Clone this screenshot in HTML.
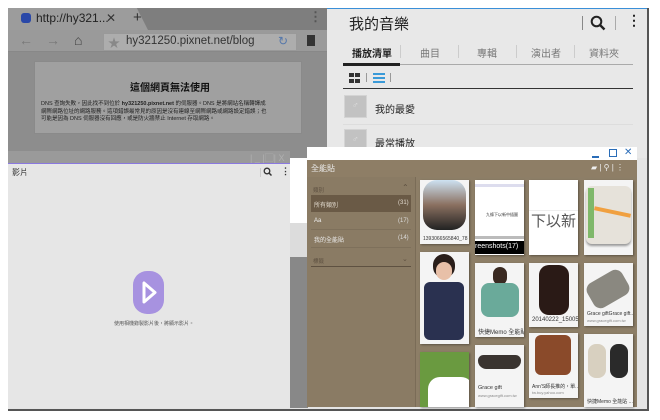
<!DOCTYPE html>
<html><head><meta charset="utf-8"><style>
*{margin:0;padding:0;box-sizing:border-box}
body{width:660px;height:420px;background:#fff;position:relative;overflow:hidden;font-family:"Liberation Sans","Noto Sans CJK TC",sans-serif}
.a{position:absolute}
.t{position:absolute;white-space:nowrap}
.card{position:absolute;background:#f4f4f4;box-shadow:1px 1px 2px rgba(0,0,0,.35);overflow:hidden}
.cap{position:absolute;left:3px;font-size:6px;color:#333;white-space:nowrap}
</style></head><body>
<div class="a" style="left:8px;top:8px;width:641px;height:403px;background:#555"></div>
<div class="a" style="left:8px;top:8px;width:639px;height:401px;background:#e4e4e4"></div>

<!-- browser -->
<div class="a" style="left:8px;top:8px;width:319px;height:160px;background:#8d8d8d"></div>
<div class="a" style="left:8px;top:8px;width:319px;height:22px;background:#7e7e7e"></div>
<div class="a" style="left:8px;top:8px;width:140px;height:22px;background:#9c9c9c;clip-path:polygon(0 0,92% 0,100% 100%,0 100%)"></div>
<div class="a" style="left:21px;top:13px;width:10px;height:10px;border-radius:3px;background:#2a48a8"></div>
<div class="t" style="left:36px;top:11px;font-size:12px;color:#222">http://hy321...</div>
<div class="t" style="left:106px;top:11px;font-size:12px;color:#333">✕</div>
<div class="t" style="left:133px;top:9px;font-size:15px;color:#333">+</div>
<div class="t" style="left:309px;top:9px;font-size:13px;color:#555;font-weight:bold">⋮</div>
<div class="a" style="left:8px;top:30px;width:319px;height:22px;background:#9a9a9a;border-bottom:1px solid #888"></div>
<div class="t" style="left:19px;top:32px;font-size:14px;color:#777">←</div>
<div class="t" style="left:46px;top:32px;font-size:14px;color:#777">→</div>
<div class="t" style="left:74px;top:32px;font-size:14px;color:#444">⌂</div>
<div class="a" style="left:103px;top:33px;width:194px;height:18px;background:#adadad;border:1px solid #999"></div>
<div class="t" style="left:108px;top:34px;font-size:12px;color:#888">★</div>
<div class="t" style="left:126px;top:35px;font-size:11.5px;color:#333">hy321250.pixnet.net/blog</div>
<div class="t" style="left:278px;top:34px;font-size:12px;color:#5577aa">↻</div>
<div class="a" style="left:307px;top:35px;width:8px;height:11px;background:#333"></div>
<div class="a" style="left:34px;top:61px;width:268px;height:73px;background:#a0a0a0;border:1px solid #8a8a8a"></div>
<div class="t" style="left:130px;top:79px;font-size:10px;font-weight:bold;color:#111">這個網頁無法使用</div>
<div class="t" style="left:41px;top:101px;font-size:5.5px;line-height:7.5px;color:#222">DNS 查詢失敗，因此找不到位於 <b>hy321250.pixnet.net</b> 的伺服器。DNS 是將網站名稱轉譯成<br>網際網路位址的網路服務。這項錯誤最常見的原因是沒有連線至網際網路或網路設定錯誤；也<br>可能是因為 DNS 伺服器沒有回應，或是防火牆禁止 Internet 存取網路。</div>

<!-- music -->
<div class="a" style="left:327px;top:8px;width:320px;height:150px;background:#e8e8e8;border-top:1px solid #3a8fd8"></div>
<div class="t" style="left:349px;top:13px;font-size:15px;color:#222">我的音樂</div>
<div class="a" style="left:582px;top:16px;width:1px;height:14px;background:#888"></div>
<svg class="a" style="left:590px;top:15px" width="16" height="16"><circle cx="6.5" cy="6.5" r="4.8" fill="none" stroke="#222" stroke-width="2"/><path d="M10 10 L14.5 14.5" stroke="#222" stroke-width="2.4"/></svg>
<div class="a" style="left:615px;top:16px;width:1px;height:14px;background:#aaa"></div>
<div class="t" style="left:627px;top:12px;font-size:14px;color:#222;font-weight:bold">⋮</div>
<div class="t" style="left:352px;top:45px;font-size:10px;color:#222;font-weight:bold">播放清單</div>
<div class="t" style="left:420px;top:45px;font-size:10px;color:#777">曲目</div>
<div class="t" style="left:477px;top:45px;font-size:10px;color:#777">專輯</div>
<div class="t" style="left:531px;top:45px;font-size:10px;color:#777">演出者</div>
<div class="t" style="left:589px;top:45px;font-size:10px;color:#777">資料夾</div>
<div class="a" style="left:400px;top:45px;width:1px;height:13px;background:#ccc"></div>
<div class="a" style="left:458px;top:45px;width:1px;height:13px;background:#ccc"></div>
<div class="a" style="left:516px;top:45px;width:1px;height:13px;background:#ccc"></div>
<div class="a" style="left:574px;top:45px;width:1px;height:13px;background:#ccc"></div>
<div class="a" style="left:343px;top:64px;width:290px;height:1px;background:#aaa"></div>
<div class="a" style="left:343px;top:63px;width:57px;height:3px;background:#222"></div>
<div class="a" style="left:349px;top:73px;width:11px;height:10px;background:linear-gradient(90deg,#333 45%,transparent 45%,transparent 55%,#333 55%)"></div>
<div class="a" style="left:349px;top:77px;width:11px;height:2px;background:#e8e8e8"></div>
<div class="a" style="left:366px;top:73px;width:1px;height:9px;background:#999"></div>
<div class="a" style="left:373px;top:73px;width:12px;height:10px;border-top:2px solid #3a9ad8;border-bottom:2px solid #3a9ad8"></div>
<div class="a" style="left:373px;top:77px;width:12px;height:2px;background:#3a9ad8"></div>
<div class="a" style="left:390px;top:73px;width:1px;height:9px;background:#999"></div>
<div class="a" style="left:343px;top:88px;width:290px;height:1px;background:#333"></div>
<div class="a" style="left:344px;top:95px;width:23px;height:23px;background:#c2c2c2;border:1px solid #d4d4d4"></div>
<div class="t" style="left:352px;top:100px;font-size:9px;color:#ddd">♂</div>
<div class="t" style="left:375px;top:101px;font-size:10px;color:#222">我的最愛</div>
<div class="a" style="left:343px;top:124px;width:290px;height:1px;background:#ddd"></div>
<div class="a" style="left:344px;top:129px;width:23px;height:23px;background:#c2c2c2;border:1px solid #d4d4d4"></div>
<div class="t" style="left:352px;top:134px;font-size:9px;color:#ddd">♂</div>
<div class="t" style="left:375px;top:135px;font-size:10px;color:#222">最常播放</div>

<div class="a" style="left:290px;top:158px;width:18px;height:250px;background:#888"></div>
<div class="a" style="left:290px;top:158px;width:18px;height:65px;background:#fff"></div>
<div class="a" style="left:290px;top:223px;width:18px;height:34px;background:#dcdcdc"></div>

<!-- video window -->
<div class="a" style="left:8px;top:151px;width:282px;height:13px;background:#9a9a9a"></div>
<div class="t" style="left:250px;top:151px;font-size:9px;color:#b0b0b0">| _ |▢| X</div>
<div class="a" style="left:8px;top:163px;width:282px;height:1px;background:#8a78e0"></div>
<div class="a" style="left:8px;top:164px;width:282px;height:244px;background:#e6e6e6"></div>
<div class="t" style="left:12px;top:167px;font-size:8px;color:#333">影片</div>
<div class="a" style="left:260px;top:168px;width:1px;height:9px;background:#ccc"></div>
<svg class="a" style="left:263px;top:167px" width="9" height="10"><circle cx="4" cy="4" r="2.8" fill="none" stroke="#333" stroke-width="1.3"/><path d="M6 6 L8.5 8.5" stroke="#333" stroke-width="1.5"/></svg>
<div class="t" style="left:281px;top:166px;font-size:9px;color:#333;font-weight:bold">⋮</div>
<div class="a" style="left:133px;top:271px;width:31px;height:43px;border-radius:14px;background:#a792e0"></div>
<svg class="a" style="left:133px;top:271px" width="31" height="43"><path d="M11 12 L11 31 L22 21.5 Z" fill="none" stroke="#fff" stroke-width="3" stroke-linejoin="round"/></svg>
<div class="t" style="left:114px;top:320px;font-size:5px;color:#555">使用相機錄製影片後，將顯示影片。</div>

<!-- pixnet -->
<div class="a" style="left:307px;top:147px;width:330px;height:13px;background:#fff"></div>
<div class="a" style="left:592px;top:156px;width:7px;height:2px;background:#2a6db8"></div>
<div class="a" style="left:609px;top:149px;width:8px;height:8px;border:1px solid #2a6db8"></div>
<div class="t" style="left:624px;top:147px;font-size:10px;color:#2a6db8">✕</div>
<div class="a" style="left:307px;top:160px;width:330px;height:17px;background:#8e7e66"></div>
<div class="t" style="left:311px;top:163px;font-size:8px;color:#eee">全能貼</div>
<div class="t" style="left:591px;top:163px;font-size:8px;color:#eee">▰ | ⚲ | ⋮</div>
<div class="a" style="left:307px;top:177px;width:330px;height:230px;background:#8d7e67"></div>
<div class="a" style="left:307px;top:177px;width:109px;height:230px;background:#8a7b64;border-right:1px solid #7a6c57"></div>
<div class="t" style="left:313px;top:186px;font-size:5.5px;color:#5e5141">類別</div>
<div class="t" style="left:402px;top:183px;font-size:8px;color:#5e5141">⌃</div>
<div class="a" style="left:311px;top:195px;width:100px;height:17px;background:#6a5a46"></div>
<div class="t" style="left:314px;top:200px;font-size:6px;color:#e0d8cc">所有類別</div>
<div class="t" style="left:398px;top:200px;font-size:6px;color:#e0d8cc">(31)</div>
<div class="t" style="left:314px;top:218px;font-size:6px;color:#eee">Aa</div>
<div class="t" style="left:398px;top:218px;font-size:6px;color:#ddd">(17)</div>
<div class="a" style="left:311px;top:229px;width:100px;height:1px;background:#7e705b"></div>
<div class="t" style="left:314px;top:235px;font-size:6px;color:#eee">我的全能貼</div>
<div class="t" style="left:398px;top:235px;font-size:6px;color:#ddd">(14)</div>
<div class="a" style="left:311px;top:247px;width:100px;height:1px;background:#7e705b"></div>
<div class="t" style="left:313px;top:257px;font-size:5.5px;color:#5e5141">標籤</div>
<div class="t" style="left:402px;top:255px;font-size:7px;color:#5e5141">⌄</div>
<div class="a" style="left:311px;top:266px;width:100px;height:1px;background:#5e5141"></div>

<div class="card" style="left:420px;top:180px;width:49px;height:64px">
 <div class="a" style="left:3px;top:0;width:43px;height:50px;border-radius:14px;background:linear-gradient(#cde2f2,#8a7060 50%,#222)"></div>
 <div class="cap" style="top:56px;font-size:5px">1393066565840_78</div></div>
<div class="card" style="left:475px;top:180px;width:49px;height:75px;background:#fff">
 <div class="a" style="left:0;top:4px;width:49px;height:3px;background:#dde"></div>
 <div class="cap" style="top:32px;left:11px;font-size:4px">九條下以新中插圖</div>
 <div class="a" style="left:0;top:56px;width:49px;height:3px;background:#bbb"></div>
 <div class="a" style="left:0;top:61px;width:49px;height:13px;background:#000"></div>
 <div class="cap" style="top:63px;left:0;color:#fff;font-size:7px">reenshots(17)</div></div>
<div class="card" style="left:529px;top:180px;width:49px;height:75px;background:#fff">
 <div class="a" style="left:0;top:30px;width:49px;height:1px;background:#eee"></div>
 <div class="t" style="left:2px;top:30px;font-size:15px;color:#555">下以新</div></div>
<div class="card" style="left:584px;top:180px;width:49px;height:75px">
 <div class="a" style="left:2px;top:6px;width:45px;height:58px;border-radius:6px;background:#e6e2da;box-shadow:0 2px 2px #999"></div>
 <div class="a" style="left:4px;top:8px;width:6px;height:50px;background:#7fb86a"></div>
 <div class="a" style="left:10px;top:30px;width:37px;height:4px;background:#f0a040;transform:rotate(12deg)"></div></div>
<div class="card" style="left:420px;top:252px;width:49px;height:92px">
 <div class="a" style="left:13px;top:2px;width:22px;height:24px;border-radius:11px;background:#2a1e1a"></div>
 <div class="a" style="left:16px;top:10px;width:16px;height:18px;border-radius:8px;background:#e8c0a8"></div>
 <div class="a" style="left:4px;top:30px;width:40px;height:58px;border-radius:6px;background:#2a3150"></div></div>
<div class="card" style="left:475px;top:263px;width:49px;height:74px">
 <div class="a" style="left:18px;top:4px;width:14px;height:18px;border-radius:7px;background:#3a2a22"></div>
 <div class="a" style="left:6px;top:20px;width:38px;height:34px;border-radius:8px;background:#6aaa9a"></div>
 <div class="cap" style="top:64px">快捷Memo 全能貼 ...</div></div>
<div class="card" style="left:529px;top:263px;width:49px;height:64px">
 <div class="a" style="left:10px;top:2px;width:30px;height:50px;border-radius:10px;background:#2a1a16"></div>
 <div class="cap" style="top:54px">20140222_150059</div></div>
<div class="card" style="left:584px;top:263px;width:49px;height:63px">
 <div class="a" style="left:4px;top:12px;width:40px;height:28px;border-radius:8px;background:#8a8880;transform:rotate(-30deg)"></div>
 <div class="cap" style="top:48px;font-size:5px">Grace giftGrace gift...</div>
 <div class="cap" style="top:55px;font-size:4px;color:#888">www.gracegift.com.tw</div></div>
<div class="card" style="left:420px;top:352px;width:49px;height:55px;background:#6a9a40">
 <div class="a" style="left:8px;top:25px;width:45px;height:40px;border-radius:12px;background:#fff"></div></div>
<div class="card" style="left:475px;top:345px;width:49px;height:62px">
 <div class="a" style="left:3px;top:10px;width:43px;height:14px;border-radius:8px 8px 12px 12px;background:#3a3430"></div>
 <div class="cap" style="top:40px;font-size:5.5px">Grace gift</div>
 <div class="cap" style="top:48px;font-size:4px;color:#888">www.gracegift.com.tw</div></div>
<div class="card" style="left:529px;top:333px;width:49px;height:65px">
 <div class="a" style="left:6px;top:2px;width:36px;height:40px;border-radius:6px;background:#8a4a2a"></div>
 <div class="cap" style="top:50px;font-size:5px">Ann'S師長推的，單...</div>
 <div class="cap" style="top:57px;font-size:4px;color:#888">tw.buy.yahoo.com</div></div>
<div class="card" style="left:584px;top:334px;width:49px;height:73px">
 <div class="a" style="left:4px;top:10px;width:18px;height:34px;border-radius:8px;background:#d8d0c0"></div>
 <div class="a" style="left:26px;top:10px;width:18px;height:34px;border-radius:8px;background:#2a2a2a"></div>
 <div class="cap" style="top:64px;font-size:5px">快捷Memo 全能貼 ...</div></div>
</body></html>
